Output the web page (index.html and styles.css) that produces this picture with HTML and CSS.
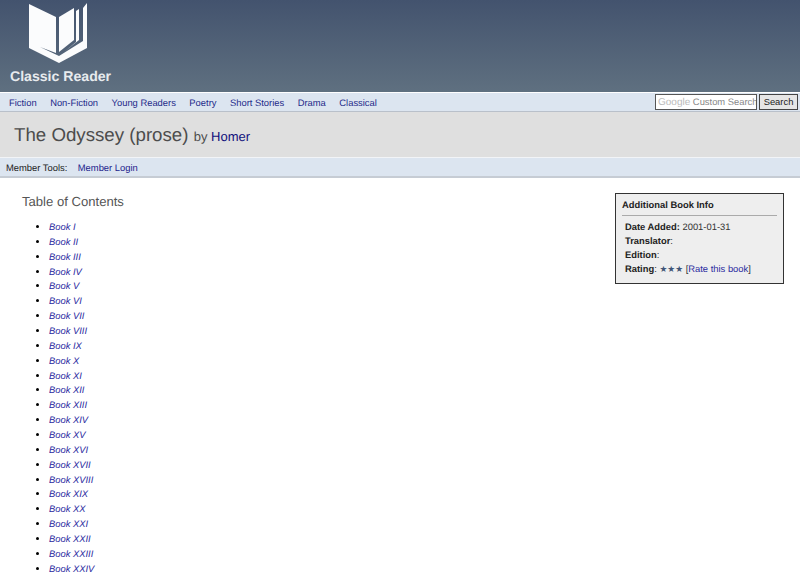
FILE: index.html
```html
<!DOCTYPE html>
<html lang="en">
<head>
<meta charset="utf-8">
<title>The Odyssey (prose) by Homer</title>
<link rel="stylesheet" href="styles.css">
</head>
<body>
<header class="masthead">
  <a class="logo" href="#">
    <svg class="logo-mark" width="62" height="62" viewBox="0 0 62 62" aria-hidden="true">
      <path fill="#fbfcfd" d="M2 1 L29 14 L29 50 L13 44 L32 53 L56 38 L56 5 L60 0 L60 45 L32 60 L2 45 Z"/>
      <path fill="#fbfcfd" d="M32 14 L47 5 L47 37 L32 49 Z"/>
      <path fill="#fbfcfd" d="M49 8 L52 6 L52 37 L37 49 L49 39 Z"/>
    </svg>
    <span class="logo-text">Classic Reader</span>
  </a>
</header>
<nav class="nav">
  <ul class="nav-list">
    <li><a href="#">Fiction</a></li>
    <li><a href="#">Non-Fiction</a></li>
    <li><a href="#">Young Readers</a></li>
    <li><a href="#">Poetry</a></li>
    <li><a href="#">Short Stories</a></li>
    <li><a href="#">Drama</a></li>
    <li><a href="#">Classical</a></li>
  </ul>
  <form class="search">
    <div class="search-box"><span class="google">Google</span> Custom Search</div>
    <button class="search-btn" type="button">Search</button>
  </form>
</nav>
<div class="title-band">
  <h1 class="title">The Odyssey (prose) <small class="by">by <a href="#">Homer</a></small></h1>
</div>
<div class="tools">
  <span>Member Tools:</span>
  <a href="#">Member Login</a>
</div>
<main class="content">
  <section class="toc">
    <h2 class="toc-title">Table of Contents</h2>
    <ul class="toc-list">
      <li><a href="#">Book I</a></li>
      <li><a href="#">Book II</a></li>
      <li><a href="#">Book III</a></li>
      <li><a href="#">Book IV</a></li>
      <li><a href="#">Book V</a></li>
      <li><a href="#">Book VI</a></li>
      <li><a href="#">Book VII</a></li>
      <li><a href="#">Book VIII</a></li>
      <li><a href="#">Book IX</a></li>
      <li><a href="#">Book X</a></li>
      <li><a href="#">Book XI</a></li>
      <li><a href="#">Book XII</a></li>
      <li><a href="#">Book XIII</a></li>
      <li><a href="#">Book XIV</a></li>
      <li><a href="#">Book XV</a></li>
      <li><a href="#">Book XVI</a></li>
      <li><a href="#">Book XVII</a></li>
      <li><a href="#">Book XVIII</a></li>
      <li><a href="#">Book XIX</a></li>
      <li><a href="#">Book XX</a></li>
      <li><a href="#">Book XXI</a></li>
      <li><a href="#">Book XXII</a></li>
      <li><a href="#">Book XXIII</a></li>
      <li><a href="#">Book XXIV</a></li>
    </ul>
  </section>
  <aside class="info">
    <h3 class="info-title">Additional Book Info</h3>
    <dl class="info-list">
      <div><b>Date Added:</b> 2001-01-31</div>
      <div><b>Translator</b>:</div>
      <div><b>Edition</b>:</div>
      <div><b>Rating</b>: <span class="stars">★★★</span> [<a href="#">Rate this book</a>]</div>
    </dl>
  </aside>
</main>
</body>
</html>
```
FILE: styles.css
```css
* { box-sizing: border-box; }
html, body { height: 577px; overflow: hidden; }
body {
  margin: 0;
  background: #fff;
  color: #333;
  font-family: "Liberation Sans", Arial, sans-serif;
  font-size: 9.400px;
  text-rendering: geometricPrecision;
}
a { color: #1c1c8c; text-decoration: none; }

.masthead {
  height: 92px;
  padding: 3px 0 0 10px;
  background: linear-gradient(#43536e, #5f7080);
}
.logo { display: flex; flex-direction: column; width: 102px; }
.logo-mark { margin-left: 17px; }
.logo-text {
  margin-top: 3px;
  color: #e8ebee;
  font-size: 14.100px;
  font-weight: bold;
  line-height: 16px;
  white-space: nowrap;
}

.nav {
  display: flex;
  justify-content: space-between;
  align-items: center;
  height: 19px;
  margin-top: 1px;
  padding: 0 2px 0 9px;
  background: #dce5f0;
  border-bottom: 1px solid #b9c0ca;
}
.nav-list { display: flex; gap: 13.500px; margin: 0; padding: 0; list-style: none; }
.nav-list a { color: #1e2a8a; }
.search { display: flex; gap: 2px; }
.search-box {
  width: 102px;
  height: 16px;
  padding-left: 2px;
  overflow: hidden;
  background: #fff;
  border: 1px solid #555;
  color: #888;
  font-size: 9.400px;
  line-height: 14px;
  white-space: nowrap;
}
.google { color: #bbb; font-size: 10px; }
.search-btn {
  width: 39px;
  height: 16px;
  padding: 0;
  background: #e6e6e6;
  border: 1px solid #444;
  color: #222;
  font: 9.400px/14px "Liberation Sans", Arial, sans-serif;
}

.title-band { height: 46px; padding: 12px 0 0 14px; background: #dfdfdf; border-bottom: 1px solid #f2f4f7; }
.title { margin: 0; color: #4c4c4c; font-size: 18.700px; font-weight: normal; line-height: 22px; }
.by { font-size: 13px; }
.by a { color: #10107c; }

.tools {
  display: flex;
  gap: 10.500px;
  align-items: center;
  height: 20px;
  padding-left: 6px;
  background: #dce5f0;
  border-bottom: 2px solid #c6ccd4;
}
.tools span { color: #222; }

.content { display: flex; justify-content: space-between; align-items: flex-start; padding: 0 16px 0 22px; }
.toc-title { margin: 15px 0 0; color: #555; font-size: 13.100px; font-weight: normal; line-height: 17px; }
.toc-list { margin: 9px 0 0; padding: 0 0 0 27px; color: #000; }
.toc-list li { height: 14.860px; line-height: 15px; font-style: italic; }
.toc-list a { color: #2a2aa0; }

.info {
  width: 169px;
  height: 91px;
  margin-top: 15px;
  padding: 5px 6px 0;
  background: #eee;
  border: 1px solid #333;
}
.info-title {
  margin: 0;
  padding-bottom: 5px;
  border-bottom: 1px solid #aaa;
  color: #222;
  font-size: 9.400px;
  line-height: 11px;
}
.info-list { margin: 4px 0 0 3px; color: #333; line-height: 14px; }
.info-list b { color: #222; }
.info-list a { color: #2a2aa0; }
.stars { color: #3f5577; font-size: 8.800px; line-height: 1; }
```
